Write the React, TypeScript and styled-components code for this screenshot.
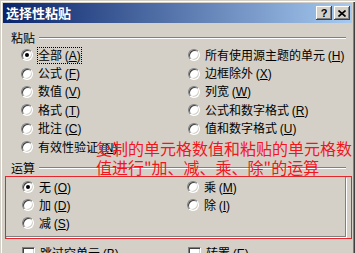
import styled, { createGlobalStyle } from "styled-components";

const GlobalStyle = createGlobalStyle`
  html, body {
    margin: 0;
    padding: 0;
    background: #d4d0c8;
  }
  body {
    font-family: "Liberation Sans", "Noto Sans CJK SC", sans-serif;
  }
`;

const Window = styled.div`
  position: relative;
  width: 355px;
  height: 253px;
  box-sizing: border-box;
  overflow: hidden;
  padding: 3px 3px 0 3px;
  display: flex;
  flex-direction: column;
  background: #d4d0c8;
  color: #000;
  font-family: "Liberation Sans", "Noto Sans CJK SC", sans-serif;
  font-size: 12px;
  box-shadow: inset 1px 1px 0 #d4d0c8, inset 2px 2px 0 #ffffff,
    inset -1px 0 0 #404040, inset -2px 0 0 #808080;
`;

const TitleBar = styled.div`
  flex: none;
  height: 20px;
  display: flex;
  align-items: center;
  padding: 0 2px 0 3px;
  background: linear-gradient(to right, #0a246a, #a6caf0);
`;

const Title = styled.span`
  flex: 1;
  color: #fff;
  font-family: "Noto Sans CJK SC", sans-serif;
  font-weight: 700;
  font-size: 13px;
  line-height: 20px;
`;

const CaptionButton = styled.button`
  width: 16px;
  height: 14px;
  padding: 0;
  margin: 0;
  border: none;
  display: flex;
  align-items: center;
  justify-content: center;
  background: #d4d0c8;
  color: #000;
  font: bold 11px "Liberation Sans", sans-serif;
  box-shadow: inset -1px -1px 0 #404040, inset 1px 1px 0 #ffffff,
    inset -2px -2px 0 #808080, inset 2px 2px 0 #d4d0c8;

  & + & {
    margin-left: 2px;
  }
`;

const Body = styled.div`
  flex: 1;
  display: flex;
  flex-direction: column;
  padding-top: 8px;
`;

const GroupHeader = styled.div<{ $gap?: number }>`
  display: flex;
  align-items: center;
  height: 14px;
  padding-left: 8px;
  margin-right: 6px;
  margin-top: ${(p) => p.$gap ?? 0}px;
`;

const GroupLabel = styled.span`
  font-family: "Noto Sans CJK SC", sans-serif;
  font-size: 12px;
  line-height: 14px;
  padding-right: 4px;
`;

const EtchedLine = styled.div`
  flex: 1;
  height: 0;
  border-top: 1px solid #808080;
  border-bottom: 1px solid #ffffff;
`;

const OptionGrid = styled.div<{ $rowH: number; $left: number }>`
  display: grid;
  grid-template-columns: ${(p) => 188 - 21 - (21 - p.$left - 3)}px 1fr;
  grid-auto-rows: ${(p) => p.$rowH}px;
  grid-auto-flow: column;
  grid-template-rows: repeat(var(--rows), ${(p) => p.$rowH}px);
  padding-left: ${(p) => p.$left}px;
`;

const Option = styled.label`
  display: flex;
  align-items: center;
  gap: 5px;
  white-space: nowrap;
  font-size: 12px;
  line-height: 14px;
`;

const OptionText = styled.span<{ $focused?: boolean }>`
  padding: 1px;
  margin-left: -1px;
  outline: ${(p) => (p.$focused ? "1px dotted #000" : "none")};
  outline-offset: -1px;
  font-family: "Noto Sans CJK SC", sans-serif;

  u,
  i {
    font-style: normal;
    font-family: "Liberation Sans", sans-serif;
  }
`;

const RadioDot = styled.span<{ $checked?: boolean }>`
  position: relative;
  flex: none;
  width: 12px;
  height: 12px;
  box-sizing: border-box;
  border-radius: 50%;
  background: #fff;
  border: 1px solid;
  border-color: #808080 #ffffff #ffffff #808080;
  box-shadow: inset 1px 1px 0 #404040, inset -1px -1px 0 #d4d0c8;

  &::after {
    content: "";
    position: absolute;
    left: 3px;
    top: 3px;
    width: 4px;
    height: 4px;
    border-radius: 50%;
    background: #000;
    display: ${(p) => (p.$checked ? "block" : "none")};
  }
`;

const CheckBox = styled.span`
  flex: none;
  width: 13px;
  height: 13px;
  box-sizing: border-box;
  background: #fff;
  border: 1px solid;
  border-color: #808080 #ffffff #ffffff #808080;
  box-shadow: inset 1px 1px 0 #404040, inset -1px -1px 0 #d4d0c8;
`;

const MarkedBox = styled.div`
  margin: 1px 0 0 2px;
  border: 1px solid #e5262c;
  padding-bottom: 1px;
`;

const InnerFrame = styled.div`
  margin-right: 5px;
  padding: 1px 0 4px 0;
  border-right: 1px solid #808080;
  border-bottom: 1px solid #808080;
  box-shadow: 1px 1px 0 #ffffff;
`;

const CheckRow = styled.div`
  display: grid;
  grid-template-columns: 166px 1fr;
  padding-left: 19px;
  margin-top: 6px;
`;

const Note = styled.div`
  position: absolute;
  left: 96px;
  top: 139px;
  color: #f2161c;
  font-family: "Noto Sans CJK SC", sans-serif;
  font-size: 16px;
  line-height: 19px;
  white-space: pre;
`;

type Opt = { text: string; key: string; checked?: boolean; focused?: boolean };

const pasteOpts: Opt[] = [
  { text: "全部", key: "A", checked: true, focused: true },
  { text: "公式", key: "F" },
  { text: "数值", key: "V" },
  { text: "格式", key: "T" },
  { text: "批注", key: "C" },
  { text: "有效性验证", key: "N" },
  { text: "所有使用源主题的单元", key: "H" },
  { text: "边框除外", key: "X" },
  { text: "列宽", key: "W" },
  { text: "公式和数字格式", key: "R" },
  { text: "值和数字格式", key: "U" },
];

const opOpts: Opt[] = [
  { text: "无", key: "O", checked: true },
  { text: "加", key: "D" },
  { text: "减", key: "S" },
  { text: "乘", key: "M" },
  { text: "除", key: "I" },
];

function Radio({ o }: { o: Opt }) {
  return (
    <Option>
      <RadioDot $checked={o.checked} />
      <OptionText $focused={o.focused}>
        {o.text} <i>(</i>
        <u>{o.key}</u>
        <i>)</i>
      </OptionText>
    </Option>
  );
}

export default function App() {
  return (
    <>
      <GlobalStyle />
      <Window>
        <TitleBar>
          <Title>选择性粘贴</Title>
          <CaptionButton>?</CaptionButton>
          <CaptionButton>
            <svg width="8" height="7" viewBox="0 0 8 7">
              <path d="M0.5 0.5 L7.5 6.5 M7.5 0.5 L0.5 6.5" stroke="#000" strokeWidth="1.6" />
            </svg>
          </CaptionButton>
        </TitleBar>
        <Body>
          <GroupHeader>
            <GroupLabel>粘贴</GroupLabel>
            <EtchedLine />
          </GroupHeader>
          <OptionGrid $rowH={18.4} $left={18} style={{ ["--rows" as string]: 6, paddingTop: 1 }}>
            {pasteOpts.map((o) => (
              <Radio key={o.key} o={o} />
            ))}
          </OptionGrid>
          <GroupHeader $gap={5}>
            <GroupLabel>运算</GroupLabel>
            <EtchedLine />
          </GroupHeader>
          <MarkedBox>
            <InnerFrame>
              <OptionGrid $rowH={18} $left={16} style={{ ["--rows" as string]: 3 }}>
                {opOpts.map((o) => (
                  <Radio key={o.key} o={o} />
                ))}
              </OptionGrid>
            </InnerFrame>
          </MarkedBox>
          <CheckRow>
            <Option>
              <CheckBox />
              <OptionText>
                跳过空单元 <i>(</i>
                <u>B</u>
                <i>)</i>
              </OptionText>
            </Option>
            <Option>
              <CheckBox />
              <OptionText>
                转置 <i>(</i>
                <u>E</u>
                <i>)</i>
              </OptionText>
            </Option>
          </CheckRow>
        </Body>
        <Note>{"复制的单元格数值和粘贴的单元格数\n值进行\"加、减、乘、除\"的运算"}</Note>
      </Window>
    </>
  );
}
